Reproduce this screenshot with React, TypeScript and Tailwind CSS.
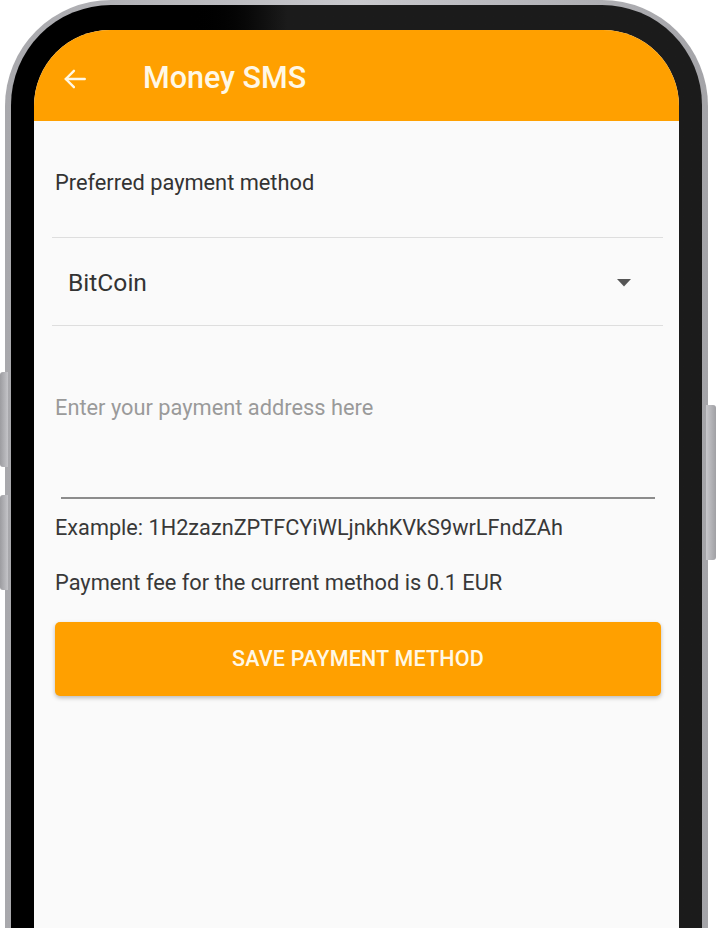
import React from "react";

export default function App() {
  const font = { fontFamily: "Roboto, 'Noto Sans', sans-serif" };
  return (
    <div className="relative w-[716px] h-[928px] overflow-hidden bg-white" style={font}>
      {/* side buttons */}
      <div className="absolute left-0 top-[372px] w-[8px] h-[95px] rounded-l-[3px] bg-linear-to-r from-[#9c9ca0] to-[#c4c4c8]" />
      <div className="absolute left-0 top-[495px] w-[8px] h-[95px] rounded-l-[3px] bg-linear-to-r from-[#9c9ca0] to-[#c4c4c8]" />
      <div className="absolute right-0 top-[405px] w-[10px] h-[155px] rounded-r-[3px] bg-linear-to-r from-[#c8c8cc] to-[#a0a0a4]" />

      {/* phone frame */}
      <div className="ml-[5px] w-[703px] h-[960px] rounded-t-[106px] bg-linear-to-r from-[#a8a8ac] via-[#c9c9cd] to-[#a4a4a8] pt-[5px] px-[6px]">
        <div className="h-full rounded-t-[100px] bg-linear-to-r from-black from-25% to-[#1b1b1b] to-40% pt-[25px] px-[23px]">
          <div className="h-full rounded-t-[76px] overflow-hidden bg-[#fafafa] flex flex-col">
            {/* header */}
            <div className="h-[91px] shrink-0 bg-[#ffa000] flex items-center pt-[6px]">
              <svg className="ml-[28px] w-[26px] h-[26px]" viewBox="0 0 24 24" fill="none" stroke="#fff8e6" strokeWidth="2.2" strokeLinecap="round" strokeLinejoin="round">
                <path d="M21 12H3.5" />
                <path d="M11 4.5L3.5 12L11 19.5" />
              </svg>
              <div className="ml-[55px] text-[30.5px] font-medium leading-none text-[#fff8e6]">Money SMS</div>
            </div>

            {/* preferred payment method */}
            <div className="h-[116px] shrink-0 pt-[48px] pl-[21px]">
              <div className="text-[21.8px] leading-[28px] text-[#333333]">Preferred payment method</div>
            </div>
            <div className="h-px shrink-0 ml-[18px] mr-[16px] bg-[#dedede]" />

            {/* select */}
            <div className="h-[87px] shrink-0 pl-[34px] pr-[48px] pt-[31px] flex items-start justify-between">
              <div className="text-[24.6px] leading-[28px] text-[#333333]">BitCoin</div>
              <svg className="mt-[10px] w-[14px] h-[8px]" viewBox="0 0 14 8">
                <polygon points="0,0 14,0 7,7.5" fill="#555555" />
              </svg>
            </div>
            <div className="h-px shrink-0 ml-[18px] mr-[16px] bg-[#dedede]" />

            {/* address input */}
            <div className="h-[171px] shrink-0 pt-[68px] pl-[21px]">
              <div className="text-[21.8px] leading-[28px] text-[#9a9a9a]">Enter your payment address here</div>
            </div>
            <div className="h-[2px] shrink-0 ml-[27px] mr-[24px] bg-[#8c8c8c]" />

            <div className="pt-[15px] pl-[21px] text-[21.7px] leading-[28px] text-[#383838]">
              Example: 1H2zaznZPTFCYiWLjnkhKVkS9wrLFndZAh
            </div>
            <div className="pt-[27px] pl-[21px] text-[21.8px] leading-[28px] text-[#383838]">
              Payment fee for the current method is 0.1 EUR
            </div>

            <div className="mt-[25px] ml-[21px] mr-[18px] h-[74px] rounded-[5px] bg-[#ffa000] shadow-[0_2px_4px_rgba(0,0,0,0.25)] flex items-center justify-center">
              <span className="text-[21.5px] font-medium text-[#fff8e6] tracking-[0.2px]">SAVE PAYMENT METHOD</span>
            </div>
          </div>
        </div>
      </div>
    </div>
  );
}
